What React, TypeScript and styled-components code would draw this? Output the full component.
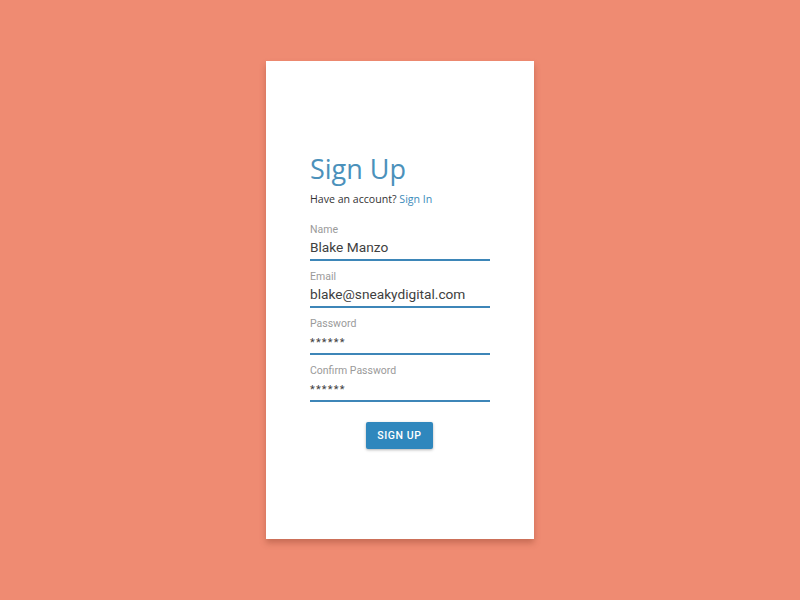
import styled, { createGlobalStyle } from 'styled-components';

const GlobalStyle = createGlobalStyle`
    html, body {
        margin: 0;
        padding: 0;
        background: #ef8b72;
    }
    body {
        font-family: Roboto, "Noto Sans", sans-serif;
    }
`

const Page = styled.div`
    display: flex;
    justify-content: center;
    width: 800px;
    height: 600px;
    padding-top: 61px;
    box-sizing: border-box;
`
const Card = styled.div`
    display: flex;
    flex-direction: column;
    width: 268px;
    height: 478px;
    box-sizing: border-box;
    padding: 92px 44px 0 44px;
    background: #ffffff;
    box-shadow: 0 4px 6px rgba(150, 70, 50, 0.45);
`
const Title = styled.h1`
    margin: 0;
    font-family: "Open Sans", sans-serif;
    font-weight: 400;
    font-size: 27px;
    line-height: 32px;
    color: #4b91bb;
`
const Subtitle = styled.div`
    margin-top: 7px;
    font-family: "Open Sans", sans-serif;
    font-size: 10.6px;
    line-height: 14px;
    color: #333333;
`
const Link = styled.a`
    color: #3d8bba;
    text-decoration: none;
`
const Form = styled.div`
    display: flex;
    flex-direction: column;
    margin-top: 8px;
`
const Field = styled.div`
    display: flex;
    flex-direction: column;
    width: 180px;
    padding: 9px 0 3px 0;
    border-bottom: 2px solid #3d86b8;
`
const Label = styled.span`
    font-size: 10.5px;
    line-height: 14px;
    color: #9a9a9a;
`
const Value = styled.span<{ $secret?: boolean }>`
    height: 18px;
    margin-top: 1px;
    padding-top: ${p => p.$secret ? '2px' : '0'};
    box-sizing: border-box;
    font-size: ${p => p.$secret ? '11px' : '13.7px'};
    line-height: 18px;
    letter-spacing: ${p => p.$secret ? '1.2px' : '0'};
    color: #404040;
`
const Actions = styled.div`
    display: flex;
    justify-content: center;
    margin-top: 20px;
`
const Button = styled.button`
    width: 67px;
    height: 27px;
    margin-left: -1px;
    padding: 0;
    border: none;
    border-radius: 2px;
    background: #2f87bd;
    color: #ffffff;
    font-family: Roboto, sans-serif;
    font-weight: 500;
    font-size: 10.5px;
    letter-spacing: 0.6px;
    box-shadow: 0 1px 3px rgba(0, 0, 0, 0.3);
`

const fields = [
    { label: 'Name', value: 'Blake Manzo' },
    { label: 'Email', value: 'blake@sneakydigital.com' },
    { label: 'Password', value: '******', secret: true },
    { label: 'Confirm Password', value: '******', secret: true },
]

export default function App() {
    return (
        <>
            <GlobalStyle />
            <Page>
                <Card>
                    <Title>Sign Up</Title>
                    <Subtitle>
                        Have an account? <Link>Sign In</Link>
                    </Subtitle>
                    <Form>
                        {fields.map(item =>
                            <Field key={item.label}>
                                <Label>{item.label}</Label>
                                <Value $secret={item.secret}>{item.value}</Value>
                            </Field>
                        )}
                    </Form>
                    <Actions>
                        <Button>SIGN UP</Button>
                    </Actions>
                </Card>
            </Page>
        </>
    )
}
